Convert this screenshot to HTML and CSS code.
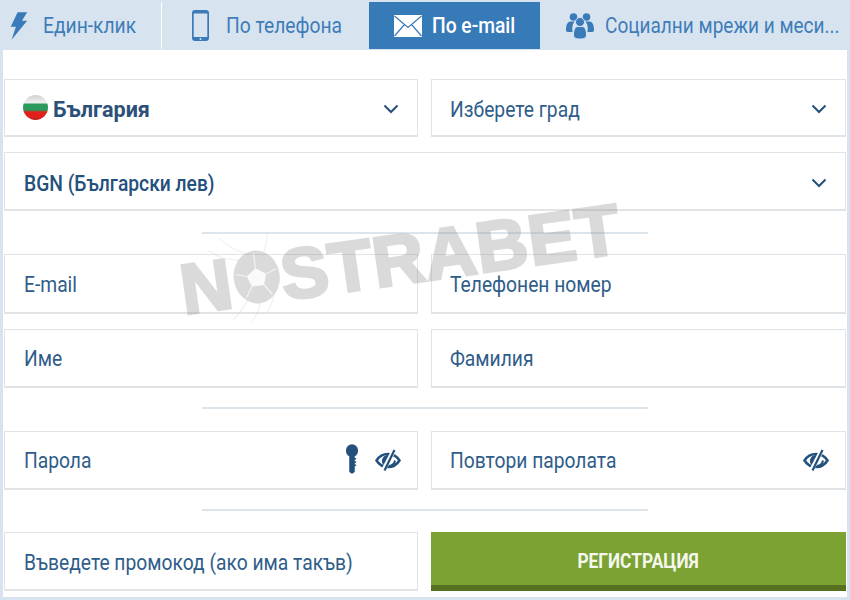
FILE: index.html
```html
<!DOCTYPE html>
<html lang="bg">
<head>
    <meta charset="UTF-8">
    <meta name="viewport" content="width=device-width, initial-scale=1.0">
    <title>Регистрация</title>
    <link rel="stylesheet" href="styles.css">
</head>
<body>
    <div class="tabs">
        <div class="tab tab-click">
            <svg class="tab-icon" width="19" height="32" viewBox="0 0 22 34"><path d="M10 1h11l-6 10h6L3 33l5-15H2z" fill="#3a7ab8"/></svg>
            <span>Един-клик</span>
        </div>
        <div class="tab tab-phone">
            <svg class="tab-icon" width="17" height="31" viewBox="0 0 17 31"><path d="M3 0h11a3 3 0 0 1 3 3v25a3 3 0 0 1-3 3H3a3 3 0 0 1-3-3V3a3 3 0 0 1 3-3zM1.700 3.500v23.500h13.600V3.500z" fill="#3a7ab8" fill-rule="evenodd"/><circle cx="8.500" cy="29" r="1" fill="#d7e4f0"/></svg>
            <span>По телефона</span>
        </div>
        <div class="tab tab-mail active">
            <svg class="tab-icon" width="28" height="22" viewBox="0 0 28 22"><path d="M0 0h28v22H0z" fill="#fff"/><path d="M0.500 1L14 12.500 27.500 1M0.500 21L10.500 9.500M27.500 21L17.500 9.500" fill="none" stroke="#3a7ab8" stroke-width="1.200"/></svg>
            <span>По e-mail</span>
        </div>
        <div class="tab tab-social">
            <svg class="tab-icon" width="28" height="26" viewBox="0 0 28 26"><g fill="#3a7ab8"><circle cx="7.500" cy="4" r="3.800"/><circle cx="20.500" cy="4" r="3.800"/><path d="M0 17c0-6 2-8.500 5-8.500h3.500C6 12 6 15 6.500 19H2c-1.500 0-2-1-2-2zM28 17c0-6-2-8.500-5-8.500h-3.500c2.500 3.500 2.500 6.500 2 10.500H26c1.500 0 2-1 2-2z"/><circle cx="14" cy="9" r="4.500" stroke="#d7e4f0"/><path d="M7.500 22c0-6 2-8.500 4.500-8.500h4c2.500 0 4.500 2.500 4.500 8.500 0 3-3 4-6.500 4s-6.500-1-6.500-4z" stroke="#d7e4f0"/></g></svg>
            <span>Социални мрежи и меси...</span>
        </div>
    </div>

    <form class="panel">
        <div class="row row-short">
            <div class="field select">
                <span class="flag"></span>
                <span class="value strong">България</span>
                <svg class="chevron" width="16" height="10" viewBox="0 0 16 10"><path d="M1.500 1.500L8 8l6.500-6.500" fill="none" stroke="#24507c" stroke-width="2"/></svg>
            </div>
            <div class="field select">
                <span class="value">Изберете град</span>
                <svg class="chevron" width="16" height="10" viewBox="0 0 16 10"><path d="M1.500 1.500L8 8l6.500-6.500" fill="none" stroke="#24507c" stroke-width="2"/></svg>
            </div>
        </div>
        <div class="row row-single">
            <div class="field select">
                <span class="value medium">BGN (Български лев)</span>
                <svg class="chevron" width="16" height="10" viewBox="0 0 16 10"><path d="M1.500 1.500L8 8l6.500-6.500" fill="none" stroke="#24507c" stroke-width="2"/></svg>
            </div>
        </div>
        <div class="divider divider-first"></div>
        <div class="row row-tall">
            <div class="field"><span class="value">E-mail</span></div>
            <div class="field"><span class="value">Телефонен номер</span></div>
        </div>
        <div class="row">
            <div class="field"><span class="value">Име</span></div>
            <div class="field"><span class="value">Фамилия</span></div>
        </div>
        <div class="divider divider-second"></div>
        <div class="row">
            <div class="field">
                <span class="value">Парола</span>
                <svg class="key" width="12" height="32" viewBox="0 0 13 32"><path d="M6.500 0a6.500 6.500 0 0 1 6.500 7c0 3-1.500 5-3.500 6v2h1.500v1.500H9.500v2h1.500V20H9.500v2h1.500v1.500H9.500V30l-3 2-3-2V13C1.500 12 0 10 0 7a6.500 6.500 0 0 1 6.500-7z" fill="#24507c"/></svg>
                <svg class="eye" width="26" height="22" viewBox="0 0 26 22"><use href="#eye-off"/></svg>
            </div>
            <div class="field">
                <span class="value">Повтори паролата</span>
                <svg class="eye" width="26" height="22" viewBox="0 0 26 22"><use href="#eye-off"/></svg>
            </div>
        </div>
        <div class="divider"></div>
        <div class="row row-last">
            <div class="field"><span class="value">Въведете промокод (ако има такъв)</span></div>
            <button type="button" class="submit"><span>РЕГИСТРАЦИЯ</span></button>
        </div>
    </form>

    <div class="watermark">
        <span class="wm-text">N<svg class="wm-ball" width="54" height="62" viewBox="0 0 56 70"><g fill="none" stroke="#cfcfcf" stroke-width="1.200"><path d="M22 8C8 2-2-6-8-14M14 14C0 12-14 6-22-2M40 8C44 0 46-6 46-12M14 60C8 68 2 74-6 80M28 64c-2 8-6 14-12 20M44 58c-2 8-6 14-10 18"/></g><ellipse cx="28" cy="35" rx="26" ry="30" fill="#8f8f8f"/><path d="M28 25l11 8-4 12H21l-4-12z" fill="#f0f0f0"/><path d="M28 8v17M39 33l12-4M35 45l8 12M21 45l-8 12M17 33L5 29" stroke="#e8e8e8" stroke-width="1.200"/></svg>STRABET</span>
    </div>

    <svg class="sprite" width="0" height="0">
        <symbol id="eye-off" viewBox="0 0 26 22">
            <path d="M1.500 11.500C4 7.500 8 5 13 5s9 2.500 11.500 6.500C22 15.500 18 18 13 18S4 15.500 1.500 11.500z" fill="none" stroke="#24507c" stroke-width="2.500"/>
            <path d="M13 6a6 6 0 0 0-4 10.500L15.500 6.500z" fill="#24507c"/>
            <path d="M8.500 21L19 1" stroke="#fff" stroke-width="4.500"/>
            <path d="M9.500 21.500L19.500 1" stroke="#24507c" stroke-width="2.200"/>
            <path d="M20 11.500a6.500 6.500 0 0 1-6 5.500" fill="none" stroke="#24507c" stroke-width="2"/>
        </symbol>
    </svg>
</body>
</html>
```

FILE: styles.css
```css
* { box-sizing: border-box; }
body {
    margin: 0;
    height: 600px;
    overflow: hidden;
    position: relative;
    font-family: Roboto, "Liberation Sans", sans-serif;
    background-color: #d7e4f0;
    color: #2f5d8a;
}
.sprite { position: absolute; }

.tabs { display: flex; height: 50px; padding-top: 2px; }
.tab {
    flex: none;
    display: flex;
    align-items: center;
    height: 47px;
    color: #3f7db9;
    font-size: 22px;
    white-space: nowrap;
}
.tab span { display: inline-block; transform: scaleX(0.875); transform-origin: left center; }
.tab-icon { flex: none; }
.tab-click { width: 162px; padding-left: 9px; gap: 15px; border-right: 1px solid #fff; }
.tab-phone { width: 207px; padding-left: 30px; gap: 17px; }
.tab-mail { width: 171px; padding-left: 25px; gap: 10px; background-color: #377ab8; color: #fff; font-weight: 500; }
.tab-social { width: 310px; padding-left: 26px; gap: 11px; }
.tab-social span { transform: scaleX(0.865); }

.panel {
    margin: 0 3px;
    height: 547px;
    padding: 29px 1px 0;
    background-color: #fff;
}
.row {
    display: grid;
    grid-template-columns: 414px 415px;
    gap: 13px;
    height: 59px;
    margin-bottom: 15px;
}
.row-short { height: 58px; }
.row-tall { height: 60px; }
.row-single { grid-template-columns: 1fr; }
.field {
    display: flex;
    align-items: center;
    padding: 0 19px;
    background-color: #fff;
    border: 1px solid #e0e4e7;
    border-bottom-width: 2px;
    font-size: 22px;
    min-width: 0;
}
.row-short .field, .row-last .field { padding-top: 3px; }
.row-single .field { padding-top: 4px; }
.row-tall .field { padding-top: 1px; }
.field + .field { padding-left: 18px; }
.value { display: inline-block; transform: scaleX(0.875); transform-origin: left center; white-space: nowrap; }
.strong { font-weight: 700; color: #2c5078; transform: scaleX(0.98); }
.medium { font-weight: 500; color: #24507c; }
.flag {
    flex: none;
    width: 25px;
    height: 25px;
    margin: -4px 5px 0 -1px;
    border-radius: 50%;
    background: linear-gradient(#cfd2cf, #eeeeee 30%, #2c9a5a 38% 60%, #e0201b 68% 88%, #b5211c);
}
.chevron { flex: none; margin: 0 -1px 0 auto; }
.key { flex: none; margin: -3px 0 0 auto; }
.eye { flex: none; margin-left: 17px; margin-right: -3px; }
.field .value + .eye { margin-left: auto; }

.divider { width: 446px; height: 2px; margin: 19px auto 21px; background-color: #dde5ec; }
.divider-first { margin: 21px auto 20px; }
.divider-second { margin-bottom: 22px; }

.submit {
    padding: 4px 0 0;
    border: 0;
    border-bottom: 6px solid #55711f;
    background-color: #7ba232;
    color: #f4f7ee;
    font-family: inherit;
    font-size: 20px;
    font-weight: 700;
}
.submit span { display: inline-block; transform: scaleX(0.865); white-space: nowrap; }

.watermark {
    position: absolute;
    left: 176px;
    top: 256px;
    transform: rotate(-8deg);
    transform-origin: left top;
    color: #8f8f8f;
    opacity: 0.32;
    pointer-events: none;
}
.wm-text {
    display: flex;
    align-items: center;
    font-family: "Liberation Sans", sans-serif;
    font-size: 71px;
    font-weight: 700;
    line-height: 70px;
    letter-spacing: 1px;
    -webkit-text-stroke: 3px #8f8f8f;
}
.wm-ball { margin: -6px -3px 0 -2px; overflow: visible; }
```
